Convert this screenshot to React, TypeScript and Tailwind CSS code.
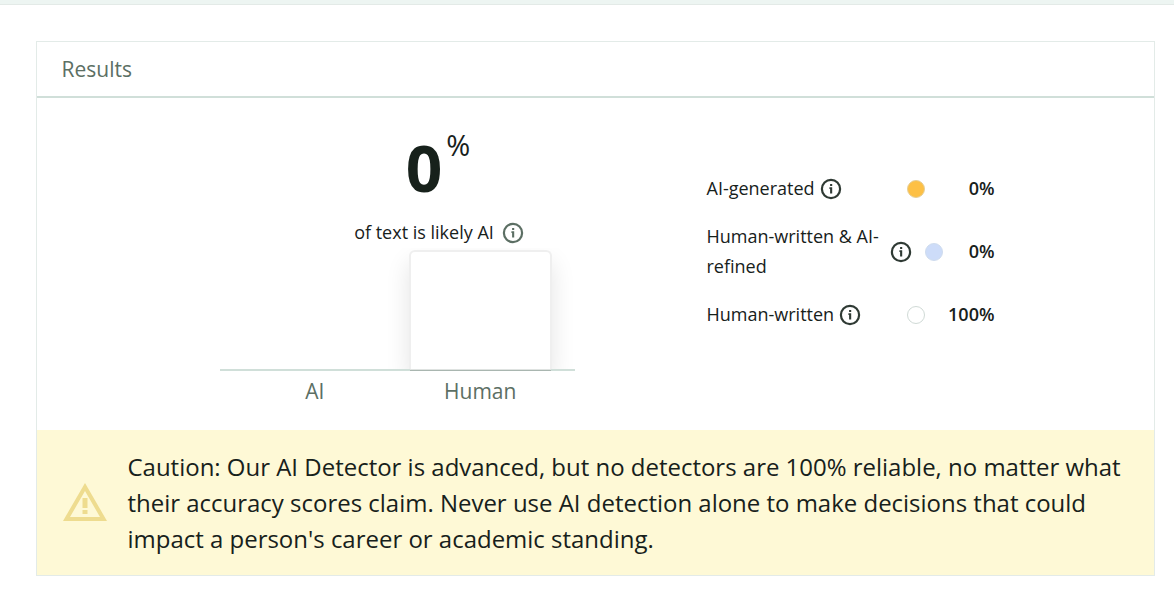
interface InfoIconProps {
  className?: string;
}

function InfoIcon({ className }: InfoIconProps) {
  return (
    <svg
      viewBox="0 0 22 22"
      fill="none"
      className={`w-[22px] h-[22px] shrink-0 ${className ?? ''}`}
    >
      <circle cx="11" cy="11" r="9.1" stroke="currentColor" strokeWidth="2.2" />
      <path
        d="M10.1 6h2.1v2h-2.1zM9.4 9.3h2.8v6.3h-2.1v-4.6h-.7z"
        fill="currentColor"
      />
    </svg>
  );
}

function WarningIcon() {
  return (
    <svg
      viewBox="0 0 44 38"
      className="w-11 h-[38px] shrink-0 mb-[2px] text-[#eedc8f]"
    >
      <path
        fill="currentColor"
        fillRule="evenodd"
        d="M22 0 44 38H0zM22 8 7 34h30z"
      />
      <path fill="currentColor" d="M19.5 15h5v10h-5zM19.5 27h5v4h-5z" />
    </svg>
  );
}

const rows = [
  {
    label: 'AI-generated',
    value: '0%',
    dot: 'bg-[#fdc045] border-[#e6cf98]',
    height: 'h-[30px]',
    labelWidth: '',
    valueWidth: 'w-[69.5px]',
  },
  {
    label: 'Human-written & AI-refined',
    value: '0%',
    dot: 'bg-[#cddcf9] border-[#cfdcee]',
    height: 'h-[60px]',
    labelWidth: 'w-[178.5px]',
    valueWidth: 'w-[51.5px]',
  },
  {
    label: 'Human-written',
    value: '100%',
    dot: 'bg-white border-[#d0dad6]',
    height: 'h-[30px]',
    labelWidth: '',
    valueWidth: 'w-[69.5px]',
  },
];

export default function App() {
  return (
    <div className="h-[589px] overflow-hidden bg-white font-['Open_Sans',sans-serif] text-[#17211b]">
      <div className="h-[5px] bg-[#edf5f2] border-b border-[#e3eae7]" />

      <section className="mt-9 ml-9 w-[1119px] h-[535px] border border-[#e3ebe8] flex flex-col">
        <header className="h-14 shrink-0 pt-px pl-[24.5px] flex items-center border-b-2 border-[#d0dfd9] text-[21px] text-[#5c6f64]">
          <span className="pt-px">Results</span>
        </header>

        <div className="h-[332px] shrink-0 flex">
          <div className="ml-[183px] w-[355px] pt-[31px]">
            <div className="pl-[83px] flex flex-col items-center">
              <div className="flex items-start h-[80px] -ml-[2px]">
                <span className="text-[64px] leading-[77px] font-bold">0</span>
                <span className="ml-1 text-[29px] leading-[32px]">%</span>
              </div>
              <div className="mt-2 flex items-center h-[31px] gap-2 text-lg whitespace-nowrap">
                <span className="-mt-[2px]">of text is likely AI</span>
                <InfoIcon className="text-[#5c6f64]" />
              </div>
            </div>

            {/* wider than the axis so the bar's shadow is only cut at the baseline */}
            <div className="h-[121px] overflow-hidden flex items-end -mx-6 px-6">
              <div className="ml-[189px] w-[143px] h-[119px] rounded-t-md bg-white border-2 border-b-0 border-[#efefef] shadow-[0_12px_24px_rgba(0,0,0,0.11)]" />
            </div>
            <div className="h-[2px] flex items-end bg-[#d0dfd9]">
              <div className="ml-[190px] w-[141px] h-[2px] border-t border-[#dfe3e1] bg-[#a9b6b0]" />
            </div>
            <div className="pt-[6px] px-6 grid grid-cols-2 gap-x-6 text-center text-[21px] leading-[28px] text-[#5c6f64]">
              <span>AI</span>
              <span>Human</span>
            </div>
          </div>

          <div className="ml-[131.5px] w-[288px] pt-[76px] flex flex-col gap-[18px] text-lg leading-[30px]">
            {rows.map((row) => (
              <div key={row.label} className={`flex items-center ${row.height}`}>
                <div className="flex-1 flex items-center gap-[5px]">
                  <span className={`shrink-0 -mt-[2px] ${row.labelWidth}`}>
                    {row.label}
                  </span>
                  <InfoIcon className="text-[#2f3a34]" />
                </div>
                <span
                  className={`w-[18px] h-[18px] shrink-0 rounded-full border ${row.dot}`}
                />
                <span
                  className={`-mt-[2px] text-right font-semibold ${row.valueWidth}`}
                >
                  {row.value}
                </span>
              </div>
            ))}
          </div>
        </div>

        <div className="flex-1 pl-[26px] flex items-center gap-[20.5px] bg-[#fef9d6]">
          <WarningIcon />
          <p className="w-[1010px] text-[23.98px] leading-9">
            Caution: Our AI Detector is advanced, but no detectors are 100%
            reliable, no matter what their accuracy scores claim. Never use AI
            detection alone to make decisions that could impact a person's
            career or academic standing.
          </p>
        </div>
      </section>
    </div>
  );
}
